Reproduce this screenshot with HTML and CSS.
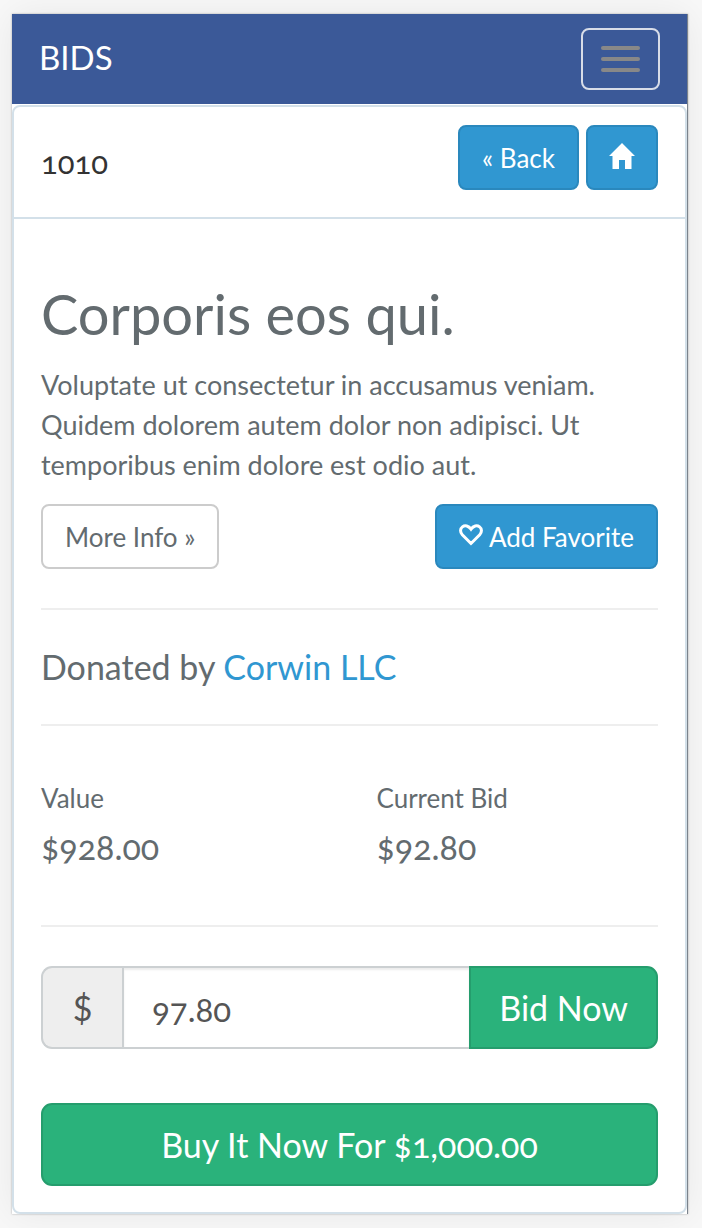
FILE: index.html
```html
<!DOCTYPE html>
<html lang="en">
<head>
<meta charset="utf-8">
<meta name="viewport" content="width=device-width, initial-scale=1">
<title>Bids</title>
<link rel="stylesheet" href="styles.css">
</head>
<body>
<div class="page">
  <header class="navbar">
    <a class="brand" href="#">BIDS</a>
    <button class="toggle" type="button" aria-label="Toggle navigation">
      <span class="toggle-bar"></span>
      <span class="toggle-bar"></span>
      <span class="toggle-bar"></span>
    </button>
  </header>
  <main class="panel">
    <div class="panel-heading">
      <span class="item-number">1010</span>
      <div class="heading-actions">
        <a class="btn btn-primary" href="#">« Back</a>
        <a class="btn btn-primary btn-icon" href="#" aria-label="Home">
          <svg class="icon icon-home" viewBox="0 0 26 26" aria-hidden="true"><path d="M13 0 26 13H22.500V26H16V17H10V26H3.500V13H0Z"/></svg>
        </a>
      </div>
    </div>
    <div class="panel-body">
      <h1 class="title">Corporis eos qui.</h1>
      <p class="description">Voluptate ut consectetur in accusamus veniam. Quidem dolorem autem dolor non adipisci. Ut temporibus enim dolore est odio aut.</p>
      <div class="item-actions">
        <a class="btn btn-default" href="#">More Info »</a>
        <button class="btn btn-primary" type="button">
          <svg class="icon icon-heart" viewBox="0 0 24 22" aria-hidden="true"><path d="M12 19.500 3.300 10.800C.8 8 1.200 4.600 3.400 2.900 6 .9 9.500 1.600 12 5.200 14.500 1.600 18 .9 20.600 2.900 22.800 4.600 23.200 8 20.700 10.800Z"/></svg>
          Add Favorite
        </button>
      </div>
      <hr class="rule">
      <h2 class="donor">Donated by <a class="link" href="#">Corwin LLC</a></h2>
      <hr class="rule">
      <dl class="figures">
        <div class="figure">
          <dt class="figure-label">Value</dt>
          <dd class="figure-amount">$928.00</dd>
        </div>
        <div class="figure">
          <dt class="figure-label">Current Bid</dt>
          <dd class="figure-amount">$92.80</dd>
        </div>
      </dl>
      <hr class="rule">
      <form class="bid-form">
        <div class="bid-group">
          <label class="addon" for="bid">$</label>
          <input class="bid-input" id="bid" type="text" value="97.80">
          <button class="btn-success btn-bid" type="button">Bid Now</button>
        </div>
        <button class="btn-success btn-buy" type="button">Buy It Now For $1,000.00</button>
      </form>
    </div>
  </main>
</div>
</body>
</html>
```
FILE: styles.css
```css
* {
  box-sizing: border-box;
}

body {
  margin: 0;
  padding: 14px 14px 14px 12px;
  background: #f8f8f8;
  color: #636b6f;
  font-family: Lato, sans-serif;
  font-size: 26px;
  line-height: 40px;
  font-variant-numeric: oldstyle-nums;
}

a {
  text-decoration: none;
}

.page {
  background: #fff;
  border-right: 1px solid #7b838c;
  box-shadow: 0 0 2px rgba(0, 0, 0, 0.3), 0 0 36px rgba(0, 0, 0, 0.07);
}

.navbar {
  display: flex;
  align-items: center;
  justify-content: space-between;
  height: 90px;
  padding: 0 27px;
  background: #3b5998;
}

.brand {
  padding-bottom: 4px;
  color: #fff;
  font-size: 33px;
}

.toggle {
  display: flex;
  flex-direction: column;
  justify-content: center;
  gap: 7px;
  width: 79px;
  height: 62px;
  padding: 0 18px;
  background: transparent;
  border: 2px solid #d8dde8;
  border-radius: 8px;
}

.toggle-bar {
  height: 4px;
  border-radius: 2px;
  background: #888;
}

.panel {
  margin-top: 1px;
  border: 2px solid #d3e0e9;
  border-radius: 8px;
  background: #fff;
}

.panel-heading {
  display: flex;
  justify-content: space-between;
  padding: 18px 27px 27px;
  border-bottom: 2px solid #d3e0e9;
}

.item-number {
  padding-top: 17px;
  color: #333;
  font-size: 31px;
}

.heading-actions {
  display: flex;
  gap: 7px;
}

.btn {
  display: flex;
  align-items: center;
  justify-content: center;
  gap: 6px;
  height: 65px;
  padding: 0 22px;
  border: 2px solid;
  border-radius: 8px;
  font: inherit;
}

.btn-icon {
  padding: 0 21px;
}

.btn-primary {
  color: #fff;
  background: #3097d1;
  border-color: #2a88bd;
}

.btn-default {
  color: #636b6f;
  background: #fff;
  border-color: #ccc;
}

.icon {
  margin-bottom: 4px;
}

.icon-home {
  width: 26px;
  height: 26px;
  fill: #fff;
}

.icon-heart {
  width: 24px;
  height: 22px;
  fill: none;
  stroke: #fff;
  stroke-width: 3;
}

.panel-body {
  padding: 64px 27px 26px;
}

.title {
  margin: 0 0 20px;
  font-size: 56px;
  font-weight: 400;
  line-height: 62px;
}

.description {
  margin: 0 0 19px;
  font-size: 27px;
}

.item-actions {
  display: flex;
  justify-content: space-between;
}

.rule {
  height: 2px;
  margin: 39px 0;
  border: 0;
  background: #eee;
}

.donor {
  margin: 0;
  font-size: 34px;
  font-weight: 400;
  line-height: 36px;
}

.link {
  color: #3097d1;
}

.figures {
  display: grid;
  grid-template-columns: 1fr 1fr;
  gap: 54px;
  margin: 52px 0;
}

.figure-label {
  margin-bottom: 7px;
}

.figure-amount {
  margin: 0 0 4px;
  font-size: 34px;
  line-height: 44px;
}

.bid-form {
  display: flex;
  flex-direction: column;
  gap: 54px;
}

.bid-group {
  display: flex;
  height: 83px;
}

.addon {
  display: flex;
  align-items: center;
  justify-content: center;
  width: 81px;
  border: 2px solid #ccd0d2;
  border-right: 0;
  border-radius: 11px 0 0 11px;
  background: #eee;
  color: #555;
  font-size: 34px;
  font-variant-numeric: lining-nums;
}

.bid-input {
  flex: 1;
  min-width: 0;
  padding: 2px 28px 0;
  border: 2px solid #ccd0d2;
  border-right: 0;
  border-radius: 0;
  background: #fff;
  box-shadow: inset 0 2px 2px rgba(0, 0, 0, 0.075);
  color: #555;
  font: inherit;
  font-size: 33px;
  font-variant-numeric: oldstyle-nums;
}

.btn-success {
  height: 83px;
  padding: 0 28px;
  border: 2px solid #259d6d;
  background: #2ab27b;
  color: #fff;
  font: inherit;
  font-size: 34px;
}

.btn-bid {
  border-radius: 0 11px 11px 0;
}

.btn-buy {
  border-radius: 11px;
}
```
